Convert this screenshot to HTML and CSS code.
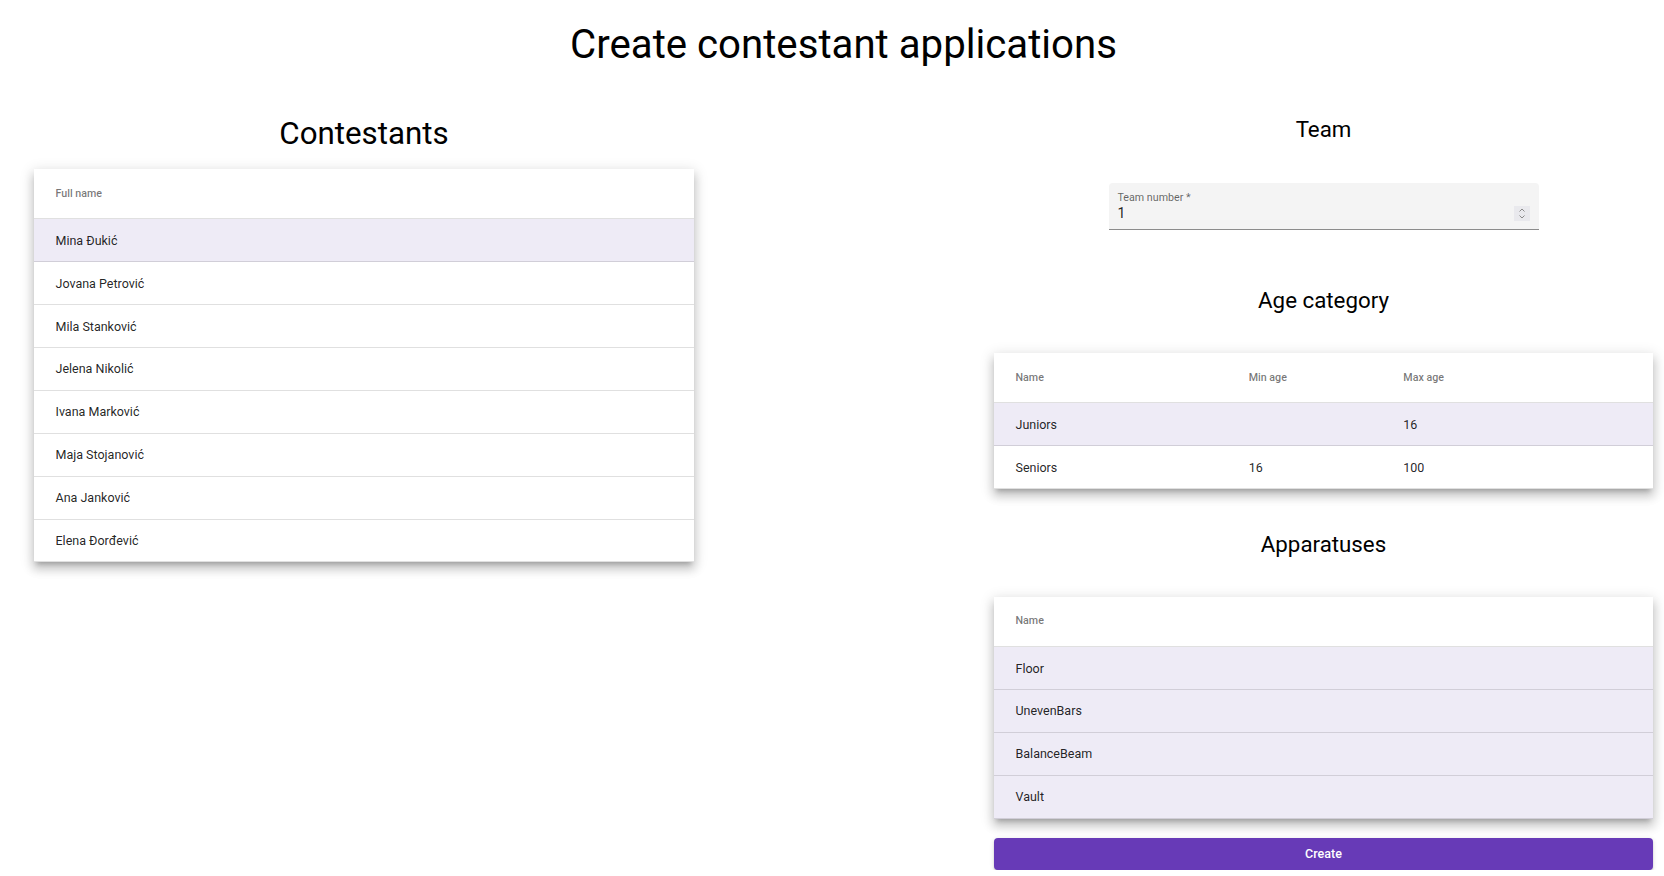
FILE: index.html
```html
<!DOCTYPE html>
<html lang="en">
<head>
<meta charset="utf-8">
<title>Create contestant applications</title>
<link rel="stylesheet" href="styles.css">
</head>
<body>
<main class="page">
  <h1 class="page-title">Create contestant applications</h1>
  <div class="columns">
    <section class="col col-left">
      <h2 class="col-title">Contestants</h2>
      <div class="table">
        <div class="row head"><div class="cell">Full name</div></div>
        <div class="row selected"><div class="cell">Mina Đukić</div></div>
        <div class="row"><div class="cell">Jovana Petrović</div></div>
        <div class="row"><div class="cell">Mila Stanković</div></div>
        <div class="row"><div class="cell">Jelena Nikolić</div></div>
        <div class="row"><div class="cell">Ivana Marković</div></div>
        <div class="row"><div class="cell">Maja Stojanović</div></div>
        <div class="row"><div class="cell">Ana Janković</div></div>
        <div class="row"><div class="cell">Elena Đorđević</div></div>
      </div>
    </section>
    <section class="col col-right">
      <h3 class="sub-title first">Team</h3>
      <div class="field">
        <div class="field-label">Team number *</div>
        <div class="field-value">
          <span>1</span>
          <span class="spinner">
            <svg width="16" height="15" viewBox="0 0 16 15">
              <path d="M5.5 5.5 L8 3 L10.5 5.5" fill="none" stroke="#8a8a8a" stroke-width="1"/>
              <path d="M5.5 9.5 L8 12 L10.5 9.5" fill="none" stroke="#8a8a8a" stroke-width="1"/>
            </svg>
          </span>
        </div>
      </div>
      <h3 class="sub-title">Age category</h3>
      <div class="table age">
        <div class="row head"><div class="cell">Name</div><div class="cell">Min age</div><div class="cell">Max age</div></div>
        <div class="row selected"><div class="cell">Juniors</div><div class="cell"></div><div class="cell">16</div></div>
        <div class="row"><div class="cell">Seniors</div><div class="cell">16</div><div class="cell">100</div></div>
      </div>
      <h3 class="sub-title">Apparatuses</h3>
      <div class="table">
        <div class="row head"><div class="cell">Name</div></div>
        <div class="row selected"><div class="cell">Floor</div></div>
        <div class="row selected"><div class="cell">UnevenBars</div></div>
        <div class="row selected"><div class="cell">BalanceBeam</div></div>
        <div class="row selected"><div class="cell">Vault</div></div>
      </div>
      <button class="create-btn" type="button">Create</button>
    </section>
  </div>
</main>
</body>
</html>
```

FILE: styles.css
```css
* { box-sizing: border-box; }

html, body {
  margin: 0;
  padding: 0;
  background: #fff;
}

body {
  font-family: Roboto, "Noto Sans", sans-serif;
  color: rgba(0, 0, 0, 0.87);
}

.page {
  margin-left: 34px;
  width: 1619px;
}

.page-title {
  margin: 20.5px 0 0;
  font-size: 40.2px;
  line-height: 47.4px;
  font-weight: 400;
  color: #000;
  text-align: center;
}

.columns {
  display: flex;
  gap: 300px;
  margin-top: 48px;
}

.col-left { width: 660px; }
.col-right { width: 659px; }

.col-title {
  margin: 0 0 16.3px;
  font-size: 31.3px;
  line-height: 36.7px;
  font-weight: 400;
  color: #000;
  text-align: center;
}

.sub-title {
  margin: 41.4px 0 40.1px;
  font-size: 22.3px;
  line-height: 26px;
  font-weight: 400;
  color: #000;
  text-align: center;
}

.sub-title.first {
  margin-top: 0;
  margin-bottom: 41px;
}

.field + .sub-title {
  margin-top: 56.6px;
  margin-bottom: 40.6px;
}

.table {
  background: #fff;
  box-shadow: 0 4.5px 4.5px -2.7px rgba(0,0,0,.2), 0 7px 9px 1px rgba(0,0,0,.14), 0 2.7px 12.5px 1.8px rgba(0,0,0,.12);
}

.row {
  display: flex;
  align-items: center;
  height: 42.9px;
  border-bottom: 1px solid rgba(0, 0, 0, 0.12);
  font-size: 12.5px;
  color: rgba(0, 0, 0, 0.87);
}

.row.head {
  height: 50.4px;
  font-size: 10.7px;
  font-weight: 500;
  color: rgba(0, 0, 0, 0.54);
  padding-bottom: 1px;
}

.row.selected {
  background: #eeebf6;
}

.cell {
  padding-left: 21.5px;
}

.age .cell:nth-child(1) { width: 254.7px; }
.age .cell:nth-child(2) { width: 154.6px; padding-left: 0; }
.age .cell:nth-child(3) { flex: 1; padding-left: 0; }

.field {
  width: 430px;
  margin: 0 auto;
  background: #f4f4f4;
  border-radius: 4px 4px 0 0;
  border-bottom: 1px solid #8c8c8c;
  padding: 8px 9px 7px 9px;
}

.field-label {
  font-size: 10.7px;
  line-height: 13px;
  color: rgba(0, 0, 0, 0.6);
}

.field-value {
  margin-top: 1px;
  display: flex;
  justify-content: space-between;
  align-items: center;
  font-size: 14px;
  line-height: 17px;
  color: rgba(0, 0, 0, 0.87);
}

.spinner {
  display: flex;
  width: 16px;
  height: 15px;
  background: #e9e9ed;
  margin-top: 1px;
}

.create-btn {
  display: block;
  width: 659px;
  height: 32px;
  margin-top: 19px;
  border: 0;
  border-radius: 4px;
  background: #673ab7;
  color: #fff;
  font-family: Roboto, "Noto Sans", sans-serif;
  font-size: 12.5px;
  font-weight: 500;
  box-shadow: 0 3px 1px -2px rgba(0,0,0,.2), 0 2px 2px 0 rgba(0,0,0,.14), 0 1px 5px 0 rgba(0,0,0,.12);
}
```
